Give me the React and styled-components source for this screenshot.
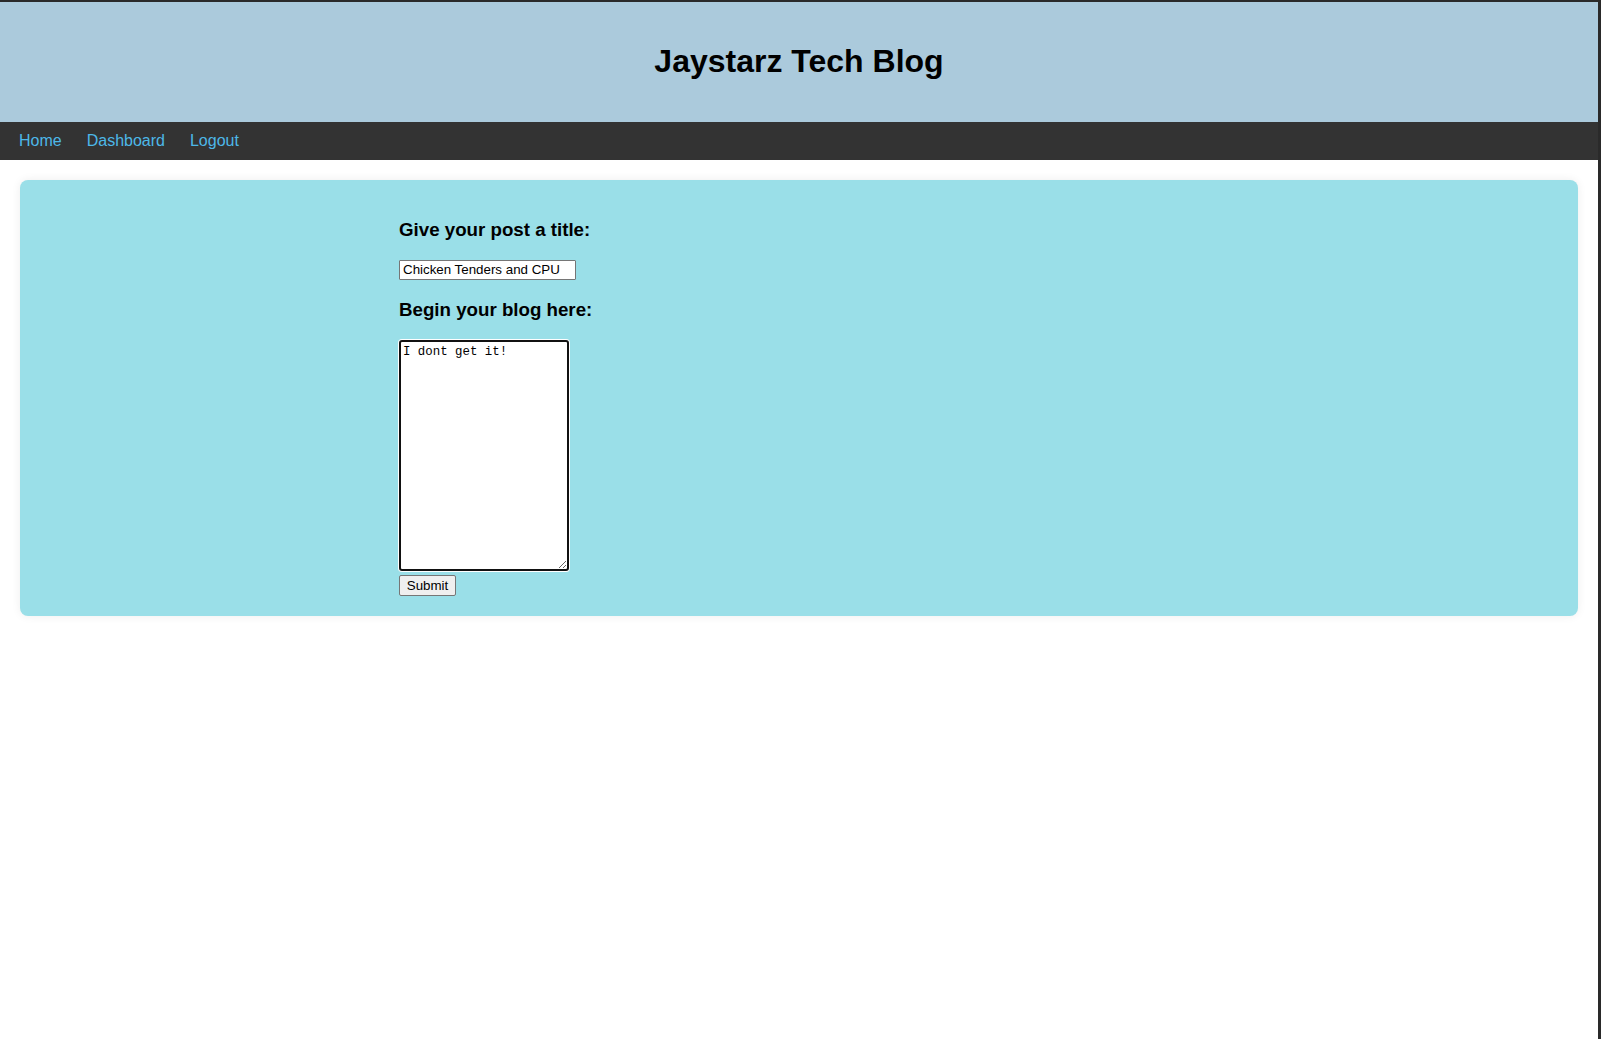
import React from "react";
import styled, { createGlobalStyle } from "styled-components";

const GlobalStyle = createGlobalStyle`
  html, body {
    margin: 0;
    padding: 0;
    background: #ffffff;
    font-family: "Liberation Sans", Arial, sans-serif;
  }
`;

const App = () => {
  return (
    <Page>
      <GlobalStyle />
      <Header>
        <Title>Jaystarz Tech Blog</Title>
      </Header>
      <Nav>
        <NavLink href="#">Home</NavLink>
        <NavLink href="#">Dashboard</NavLink>
        <NavLink href="#">Logout</NavLink>
      </Nav>
      <Main>
        <Card>
          <Form onSubmit={(e) => e.preventDefault()}>
            <Label>Give your post a title:</Label>
            <TitleInput type="text" defaultValue="Chicken Tenders and CPU" />
            <Label>Begin your blog here:</Label>
            <Body defaultValue="I dont get it!" />
            <Submit type="submit">Submit</Submit>
          </Form>
        </Card>
      </Main>
    </Page>
  );
};

const Page = styled.div`
  min-height: 100vh;
  box-sizing: border-box;
  border-top: 2px solid #2a2a2a;
  border-right: 3px solid #2a2a2a;
`;

const Header = styled.header`
  height: 120px;
  display: flex;
  align-items: center;
  justify-content: center;
  background: #abcadc;
`;

const Title = styled.h1`
  margin: 0;
  font-size: 32px;
  font-weight: bold;
  color: #000;
  padding-bottom: 2px;
`;

const Nav = styled.nav`
  height: 38px;
  display: flex;
  align-items: center;
  gap: 25px;
  padding-left: 19px;
  background: #333333;
`;

const NavLink = styled.a`
  color: #4db8e8;
  text-decoration: none;
  font-size: 16px;
`;

const Main = styled.main`
  padding: 20px 20px 0 20px;
`;

const Card = styled.section`
  background: #9adfe8;
  border-radius: 8px;
  padding: 20px;
  box-shadow: 0 0 10px rgba(0, 0, 0, 0.07);
`;

const Form = styled.form`
  display: flex;
  flex-direction: column;
  align-items: flex-start;
  max-width: 800px;
  margin: 0 auto;
`;

const Label = styled.h3`
  margin: 19px 0;
  font-size: 18.72px;
  line-height: 21.5px;
  font-weight: bold;
  color: #000;
`;

const TitleInput = styled.input`
  box-sizing: border-box;
  width: 177px;
  height: 20px;
  padding: 1px 3px;
  border: 1px solid #767676;
  border-radius: 1px;
  font-family: "Liberation Sans", Arial, sans-serif;
  font-size: 13.33px;
  color: #000;
  background: #fff;
  outline: none;
`;

const Body = styled.textarea`
  box-sizing: border-box;
  width: 170px;
  height: 231px;
  margin-top: 1px;
  padding: 3px 2px 2px;
  border: 2px solid #111;
  border-radius: 3px;
  box-shadow: 0 0 0 1px #ffffff;
  font-family: "Liberation Mono", "DejaVu Sans Mono", monospace;
  font-size: 12.4px;
  line-height: 15px;
  color: #000;
  background: #fff;
  outline: none;
`;

const Submit = styled.button`
  margin-top: 4px;
  box-sizing: border-box;
  width: 57px;
  height: 21px;
  padding: 0;
  background: #efefef;
  border: 1px solid #767676;
  border-radius: 2px;
  font-family: "Liberation Sans", Arial, sans-serif;
  font-size: 13.33px;
  color: #000;
`;

export default App;
